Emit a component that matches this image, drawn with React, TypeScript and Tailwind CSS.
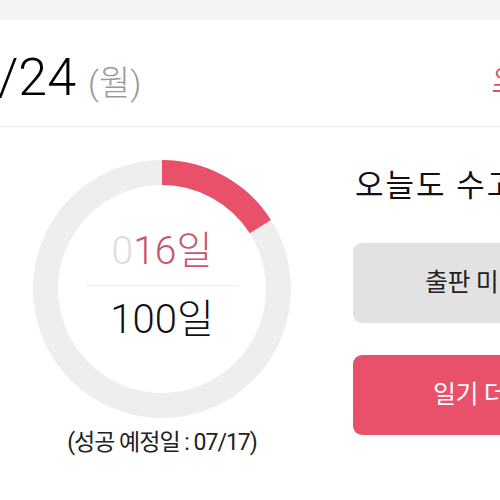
import React from 'react';

const FONT = { fontFamily: '"Roboto", "Noto Sans CJK KR", sans-serif' };

const ProgressRing: React.FC<{ done: number; total: number }> = ({ done, total }) => {
  const r = 116.5;
  const c = 2 * Math.PI * r;
  const arc = (done / total) * c;
  return (
    <svg className="absolute inset-0" width="258" height="258" viewBox="0 0 258 258">
      <circle cx="129" cy="129" r={r} fill="none" stroke="#eeeeee" strokeWidth="25" />
      <circle
        cx="129"
        cy="129"
        r={r}
        fill="none"
        stroke="#e9506a"
        strokeWidth="25"
        strokeDasharray={`${arc} ${c}`}
        transform="rotate(-90 129 129)"
      />
    </svg>
  );
};

export default function App() {
  return (
    <div className="w-[500px] h-[500px] overflow-hidden bg-white" style={FONT}>
      <div className="h-[20px] bg-[#f4f4f4]" />

      {/* date header */}
      <div className="flex w-[560px] h-[107px] items-center justify-between border-b border-[#ebebeb] pt-[10px] pr-[23px]">
        <div className="-ml-[60px] flex items-baseline">
          <span className="text-[52px] font-light text-black">07/24</span>
          <span className="ml-[12px] text-[34px] font-light text-[#999]">(월)</span>
        </div>
        <a className="text-[24px] text-[#d8566e] underline underline-offset-4">오늘</a>
      </div>

      <div className="flex">
        {/* progress */}
        <div className="pl-[33px] pt-[33px] flex flex-col items-center w-[291px]">
          <div className="relative w-[258px] h-[258px] flex flex-col items-center justify-center">
            <ProgressRing done={16} total={100} />
            <div className="relative flex flex-col items-center -mt-[6px]">
              <div className="text-[39px] font-light leading-none">
                <span className="text-[#dddddd]">0</span>
                <span className="text-[#c9566e]">16일</span>
              </div>
              <div className="w-[152px] h-px bg-[#eeeeee] my-[14px]" />
              <div className="text-[40px] font-light leading-none text-[#111]">100일</div>
            </div>
          </div>
          <div className="mt-[8px] text-[23px] tracking-[-1px] text-[#222]">(성공 예정일 : 07/17)</div>
        </div>

        {/* actions */}
        <div className="pl-[62px] pt-[43px] flex flex-col shrink-0">
          <div className="text-[31px] leading-none tracking-[2px] text-[#111] whitespace-nowrap ml-[2px]">오늘도 수고했어요!</div>
          <button className="mt-[42px] w-[294px] h-[80px] rounded-[9px] bg-[#e2e2e2] pl-[72px] text-left text-[25px] tracking-[-0.5px] text-[#222] whitespace-nowrap">
            출판 미리보기
          </button>
          <button className="mt-[32px] w-[294px] h-[80px] rounded-[9px] bg-[#e9506a] pl-[80px] text-left text-[25px] tracking-[-0.5px] text-white whitespace-nowrap">
            일기 더보기
          </button>
        </div>
      </div>
    </div>
  );
}
